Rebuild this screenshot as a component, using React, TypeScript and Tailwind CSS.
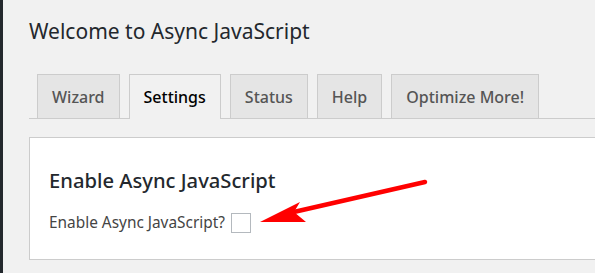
import React from "react";

const tabs = ["Wizard", "Settings", "Status", "Help", "Optimize More!"];

function Arrow() {
  return (
    <svg
      className="pointer-events-none absolute left-0 top-0"
      width="595"
      height="273"
      viewBox="0 0 595 273"
      aria-hidden="true"
    >
      <line x1="425" y1="182" x2="285" y2="214" stroke="#ff0000" strokeWidth="4.5" strokeLinecap="round" />
      <path d="M260 222 L300 202 L294 212 L306 222 Z" fill="#ff0000" />
    </svg>
  );
}

export default function App() {
  const font = { fontFamily: '"Noto Sans", "Open Sans", sans-serif' };
  return (
    <div className="relative flex h-[273px] w-[595px] overflow-hidden bg-[#f1f1f1]" style={font}>
      <div className="w-[3px] shrink-0 bg-[#23282d]" />
      <div className="flex-1 pl-[26px] pt-[17px]">
        <h1 className="text-[21px] leading-[29px] text-[#23282d]">Welcome to Async JavaScript</h1>

        {/* Tabs */}
        <div className="mt-[28px] flex items-end gap-[9px] border-b border-[#cccccc] pl-[8px]">
          {tabs.map((t) => {
            const active = t === "Settings";
            return (
              <div
                key={t}
                className={
                  active
                    ? "-mb-px flex h-[45px] items-center border border-b-0 border-[#cccccc] bg-[#f1f1f1] px-[14px] text-[16px] font-medium text-black"
                    : "flex h-[44px] items-center border border-b-0 border-[#cccccc] bg-[#e5e5e5] px-[14px] text-[16px] font-medium text-[#555555]"
                }
              >
                {t}
              </div>
            );
          })}
        </div>

        {/* Panel */}
        <div className="mt-[18px] h-[123px] w-[600px] border border-[#cccccc] bg-white pl-[19px] pt-[28px]">
          <h2 className="text-[20.2px] leading-[28px] font-medium text-[#23282d]">Enable Async JavaScript</h2>
          <div className="mt-[17px] flex items-center gap-[6px]">
            <span className="text-[15.4px] text-[#444444]">Enable Async JavaScript?</span>
            <span className="block h-[20px] w-[20px] border border-[#b4b9be] bg-white" />
          </div>
        </div>
      </div>
      <Arrow />
    </div>
  );
}
